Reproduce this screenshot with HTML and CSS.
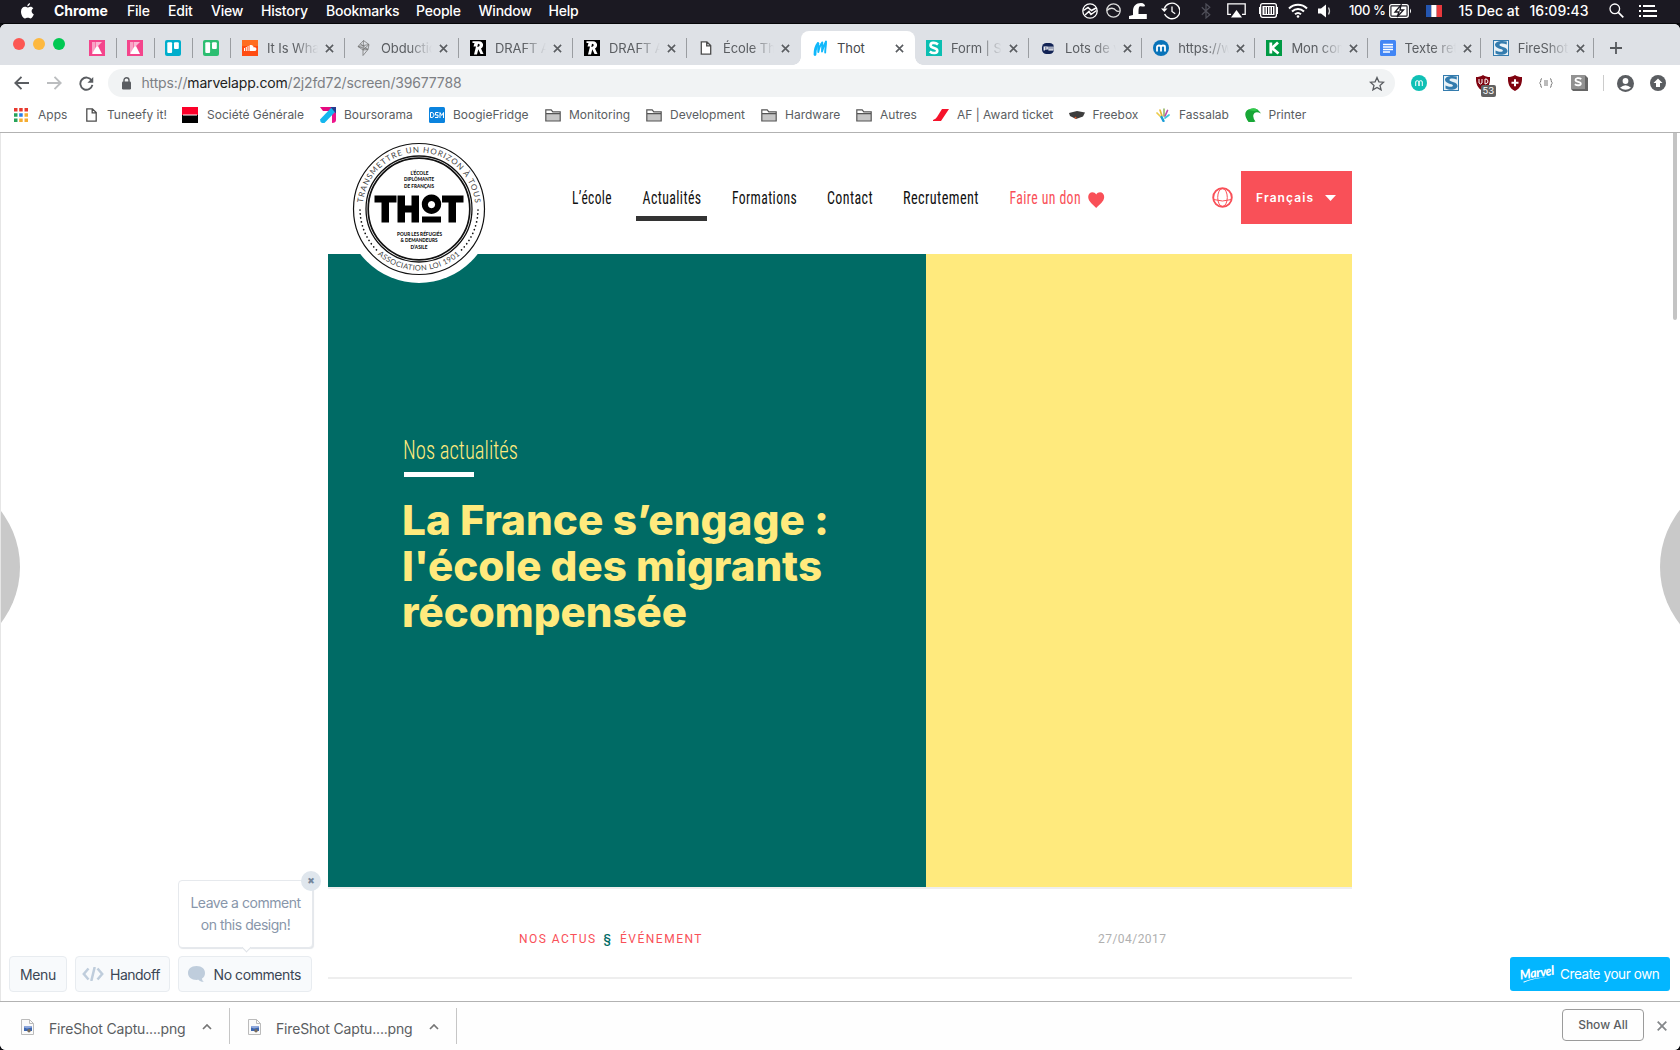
FILE: index.html
```html
<!DOCTYPE html>
<html lang="fr">
<head>
<meta charset="utf-8">
<title>Thot</title>
<link rel="stylesheet" href="styles.css">
</head>
<body>
<svg class="defs" width="0" height="0" aria-hidden="true">
  <symbol id="close" viewBox="0 0 10 10"><path d="M1 1l8 8M9 1L1 9" stroke="#5a5d61" stroke-width="1.8" fill="none"/></symbol>
  <symbol id="folder" viewBox="0 0 16 14"><path d="M1 5.5h14V13H1z" fill="#c6c6c6"/><path d="M.8 13V1.8h5.4l1.6 2h7.4V13zM.8 5.6h14.4" fill="none" stroke="#555" stroke-width="1.2"/></symbol>
  <symbol id="page" viewBox="0 0 11 14"><path d="M.8.8h5.6l3.8 3.8v8.6H.8zM6.2.8v4h4" fill="#fff" stroke="#4d4d4d" stroke-width="1.3"/></symbol>
  <symbol id="pink" viewBox="0 0 16 16"><path d="M0 0h16v16H0z" fill="#f4458c"/><path d="M3 2h3.500v11H3z" fill="#f9a3c6"/><path d="M7 2h6L7 8z" fill="#f9b9d4"/><path d="M7 7l2-1 4 8H3z" fill="#fff"/></symbol>
  <symbol id="board" viewBox="0 0 16 16"><rect width="16" height="16" rx="2"/><rect x="2.3" y="2.3" width="4.8" height="10.8" rx="1" fill="#fff"/><rect x="9" y="2.3" width="4.8" height="6.6" rx="1" fill="#fff"/></symbol>
  <symbol id="draft" viewBox="0 0 16 16"><path d="M0 0h16v16H0z"/><path d="M2.500 3V1.300h6.500c4.800 0 5.300 5.700 2 7.200l2.500 5.500h-3L8.300 9.300 7 14.500H4L6 6.500H3.500L4.500 3zM8 3.800L7.300 7c2.700 0 3.400-3.200.7-3.200z" fill="#fff" fill-rule="evenodd"/></symbol>
  <symbol id="fireshot" viewBox="0 0 16 16"><path d="M0 0h16v16H0z" fill="#347cae"/><path d="M1 1h14v14H1z" fill="#e9f2f7"/><path d="M13.800 1.500v3C10 3 6 3.200 6.500 5.300c.5 1.700 8 1.700 8 5.700 0 3.500-7 5-12 2.500v-3c4 1.800 7.500 1.500 7.400 0C9.600 8.700 2 8.800 2 4.800 2 1.500 8 0 13.800 1.500z" fill="#347cae"/></symbol>
  <symbol id="file" viewBox="0 0 13 16"><path d="M.5.500h8l4 4v11H.5z" fill="#fafafa" stroke="#bbb"/><path d="M8.500.500v4h4" fill="none" stroke="#bbb"/><path d="M3 7h8v5H3z" fill="#8fa8dc"/><path d="M3 8.500l3 1 5-1V12H3z" fill="#3c66b0"/><circle cx="8" cy="11.800" r="1.700" fill="#7a6c5b"/></symbol>
  <symbol id="up" viewBox="0 0 10 6"><path d="M1 5l4-4 4 4" fill="none" stroke="#757575" stroke-width="1.700"/></symbol>
</svg>

<header class="menubar">
  <nav class="menus">
    <svg width="13" height="16" viewBox="0 0 13 16"><path d="M9 0c.1 1.700-1.200 3.300-2.700 3.300C6.100 1.800 7.500.200 9 0zM6.500 4.500c.7 0 1.500-.8 2.900-.8 1.200 0 2.300.6 2.900 1.600-2.500 1.500-2 5 .5 6-.7 1.900-1.900 4.100-3.200 4.100-1.100 0-1.500-.7-2.800-.7s-1.700.7-2.800.7C1.900 15.400 0 11.500 0 8.700 0 5.600 2 3.800 3.900 3.800c1.200 0 2 .7 2.600.7z" fill="#fff"/></svg>
    <b>Chrome</b><span>File</span><span>Edit</span><span>View</span><span>History</span><span>Bookmarks</span><span>People</span><span>Window</span><span>Help</span>
  </nav>
  <div class="status">
    <svg width="16" height="16" viewBox="0 0 16 16" fill="none" stroke="#fff"><circle cx="8" cy="8" r="7.200" stroke-width="1.300"/><path d="M1.500 7.500L6 4.500l3.500 3L14 5M3 12l4-3.500 2 3 5.500-4" stroke-width="1.500"/></svg>
    <svg width="15" height="15" viewBox="0 0 15 15" fill="none" stroke="#ddd" stroke-width="1.300"><circle cx="7.500" cy="7.500" r="6.700"/><path d="M1 7.500c3-3 7-3 9 0 1 1 2.500 1 4 .5"/></svg>
    <svg width="18" height="17" viewBox="0 0 18 17"><path d="M4 9c0-5 3-8 8-8 3 0 4 2 4 3-2 1.300-3.500-.5-5.500.5-1 1-1 4-1 7.500h8.300v5H0v-3l4-1z" fill="#fff"/></svg>
    <svg width="19" height="18" viewBox="0 0 19 18" fill="none" stroke="#fff" stroke-width="1.300"><path d="M3.300 6.500a8 7.800 0 1 1 .3 5.600M11 4.500V9.500l3.200 2.200"/><path d="M0 6.500h6.500L3.300 10z" fill="#fff" stroke="none"/></svg>
    <svg width="10" height="16" viewBox="0 0 10 16" fill="none" stroke="#50505a" stroke-width="1.200"><path d="M.800 4.200l8 7.500L5 15V1l3.800 3.300-8 7.500"/></svg>
    <svg width="19" height="15" viewBox="0 0 19 15"><path d="M4 11.300H.8V.800h17.400v10.500H15" fill="none" stroke="#fff" stroke-width="1.300"/><path d="M9.500 7l5.500 7.500H4z" fill="#fff"/></svg>
    <svg width="19" height="15" viewBox="0 0 19 15"><rect x="1.600" y=".7" width="15.800" height="13.600" rx="2" fill="none" stroke="#fff" stroke-width="1.300"/><path d="M0 4h2v7H0zM17 4h2v7h-2zM3.500 3h12v9h-12z" fill="#fff"/><path d="M6 4v7M8.500 4v7M11 4v7M13.500 4v7" stroke="#1b1922" stroke-width="1"/></svg>
    <svg width="20" height="15" viewBox="0 0 20 15" fill="none" stroke="#fff" stroke-width="2"><path d="M1 5.500c5-5 13-5 18 0M4 8.500c3.500-3.500 8.500-3.500 12 0M7 11.300c2-1.700 4-1.700 6 0"/><circle cx="10" cy="13.500" r="1.300" fill="#fff" stroke="none"/></svg>
    <svg width="14" height="14" viewBox="0 0 14 14"><path d="M0 4.500h3L8 .5v13L3 9.500H0z" fill="#fff"/><path d="M10.500 3.500q2 3.500 0 7" fill="none" stroke="#ccc" stroke-width="1.300"/></svg>
    <span class="pct">100 %</span>
    <svg width="23" height="14" viewBox="0 0 23 14"><rect x=".7" y=".7" width="18.600" height="12.600" rx="2" fill="none" stroke="#fff" stroke-width="1.300"/><path d="M2.500 2.500h15v9h-15z" fill="#fff"/><path d="M12 1L6 8h4l-2 5 6.500-7H11z" fill="#fff" stroke="#1b1922" stroke-width="1.300"/><path d="M21 4.500q2 2.500 0 5z" fill="#fff"/></svg>
    <svg width="16" height="12" viewBox="0 0 16 12"><path d="M0 0h5.300v12H0z" fill="#2456b0"/><path d="M5.300 0h5.400v12H5.300z" fill="#fff"/><path d="M10.700 0H16v12h-5.300z" fill="#e8383c"/></svg>
    <span class="day">15 Dec at</span><span class="clock">16:09:43</span>
    <svg width="15" height="15" viewBox="0 0 15 15" fill="none" stroke="#fff"><circle cx="5.800" cy="5.800" r="4.800" stroke-width="1.300"/><path d="M9.300 9.300l5 5" stroke-width="1.700"/></svg>
    <svg width="18" height="12" viewBox="0 0 18 12" stroke="#fff" stroke-width="1.800"><path d="M0 1h2M4 1h12M0 6h2M4 6h14M0 11h2M4 11h14"/></svg>
  </div>
</header>

<div class="window">
  <div class="tabs">
    <div class="lights"><i class="red"></i><i class="amber"></i><i class="green"></i></div>
    <div class="tab pinned"><svg width="16" height="16"><use href="#pink"/></svg></div>
    <div class="tab pinned"><svg width="16" height="16"><use href="#pink"/></svg></div>
    <div class="tab pinned"><svg width="16" height="16" fill="#00aecc"><use href="#board"/></svg></div>
    <div class="tab pinned"><svg width="16" height="16" fill="#2cbe71"><use href="#board"/></svg></div>
    <div class="tab"><svg width="16" height="16" viewBox="0 0 16 16"><path d="M0 0h16v16H0z" fill="#ff4c12"/><path d="M0 0h16v6H0z" fill="#ff6d20"/><path d="M2.500 8v3M4.300 7v4M6.100 6v5" stroke="#fff" stroke-width="1"/><path d="M7.500 11V5.500c2-1.200 4 0 4.200 2 2-.6 3 .8 2.600 2.200-.3 1-1 1.300-1.800 1.300z" fill="#fff"/></svg><span>It Is Wha</span><svg class="x" width="9" height="9"><use href="#close"/></svg></div>
    <div class="tab"><svg width="16" height="16" viewBox="0 0 16 16" fill="none" stroke="#777" stroke-width=".8"><path d="M7.500.500l5.500 4-1 5-5 6V10L2 6.500zM2 6.500L13 4.500M7.500.5L7 10l6-5.500M2 6.500l10 3M4 3.500L12 9.500M7 10l5-.5"/></svg><span>Obductio</span><svg class="x" width="9" height="9"><use href="#close"/></svg></div>
    <div class="tab"><svg width="16" height="16"><use href="#draft"/></svg><span>DRAFT A</span><svg class="x" width="9" height="9"><use href="#close"/></svg></div>
    <div class="tab"><svg width="16" height="16"><use href="#draft"/></svg><span>DRAFT A</span><svg class="x" width="9" height="9"><use href="#close"/></svg></div>
    <div class="tab last"><svg width="16" height="14"><use href="#page"/></svg><span>École Th</span><svg class="x" width="9" height="9"><use href="#close"/></svg></div>
    <div class="tab active"><svg width="16" height="16" viewBox="0 0 16 16" fill="none" stroke="#10b8fb" stroke-linecap="round" stroke-linejoin="round"><path d="M3 14.500C3 10 4 6 6 3.500" stroke-width="2.800"/><path d="M6 3.500L6.300 12C7 8 8.500 4.500 10.300 2.500L10 11.500C11 8 12.500 4 14 1.500c.3 3-.9 7-.8 11" stroke-width="1.900"/></svg><span>Thot</span><svg class="x" width="9" height="9"><use href="#close"/></svg></div>
    <div class="tab"><svg width="16" height="16" viewBox="0 0 16 16"><path d="M0 0h16v16H0z" fill="#0bbfb2"/><path d="M12 4.500C9 2 4.500 2.500 4.500 5.200c0 3.600 6.800 2 6.800 5.500 0 2.800-4.600 3.200-7.500.7" fill="none" stroke="#fff" stroke-width="2.600"/></svg><span>Form | Se</span><svg class="x" width="9" height="9"><use href="#close"/></svg></div>
    <div class="tab slim"><svg width="16" height="16" viewBox="0 0 16 16"><rect x="2" y="3" width="12" height="11" rx="4.500" fill="#122355"/><path d="M4.200 10.500V7h3v2h-3M9 6.500v3.500h4V6.500M11 6.500v3.500" fill="none" stroke="#fff" stroke-width="1.200"/></svg><span>Lots de v</span><svg class="x" width="9" height="9"><use href="#close"/></svg></div>
    <div class="tab slim"><svg width="16" height="16" viewBox="0 0 16 16"><circle cx="8" cy="8" r="8" fill="#0873b9"/><path d="M4 11.500V7q0-1.500 2-1.500T8 7v4.500V7q0-1.500 2-1.500T12 7v4.500" fill="none" stroke="#fff" stroke-width="1.800"/></svg><span>https://w</span><svg class="x" width="9" height="9"><use href="#close"/></svg></div>
    <div class="tab slim"><svg width="16" height="16" viewBox="0 0 16 16"><path d="M0 0h16v16H0z" fill="#009a44"/><path d="M4.800 2.500v11M12 2.500L6 8l6.500 5.500" fill="none" stroke="#fff" stroke-width="2.800"/></svg><span>Mon com</span><svg class="x" width="9" height="9"><use href="#close"/></svg></div>
    <div class="tab slim"><svg width="16" height="16" viewBox="0 0 16 16"><rect width="16" height="16" rx="1.500" fill="#4286f5"/><path d="M3 4.500h10M3 7h10M3 9.500h10M3 12h7" stroke="#fff" stroke-width="1.300"/></svg><span>Texte ret</span><svg class="x" width="9" height="9"><use href="#close"/></svg></div>
    <div class="tab slim"><svg width="16" height="16"><use href="#fireshot"/></svg><span>FireShot</span><svg class="x" width="9" height="9"><use href="#close"/></svg></div>
    <svg class="plus" width="12" height="12" viewBox="0 0 12 12"><path d="M6 0v12M0 6h12" stroke="#55585c" stroke-width="1.800"/></svg>
  </div>

  <div class="toolbar">
    <svg width="15" height="14" viewBox="0 0 15 14"><path d="M15 7H1.500M7.500.800L1.300 7l6.200 6.200" fill="none" stroke="#5a5d61" stroke-width="1.900"/></svg>
    <svg width="15" height="14" viewBox="0 0 15 14"><path d="M0 7h13.500M7.500.800L13.700 7l-6.200 6.200" fill="none" stroke="#bbbdbf" stroke-width="1.900"/></svg>
    <svg width="15" height="15" viewBox="0 0 16 16"><path d="M13.500 4.800A6.500 6.500 0 1 0 14.300 9.500" fill="none" stroke="#5a5d61" stroke-width="2"/><path d="M15.200 1v6.200H9z" fill="#5a5d61"/></svg>
    <div class="omnibox">
      <svg width="9" height="13" viewBox="0 0 9 13"><rect y="4.500" width="9" height="8" rx="1.200" fill="#5a5d61"/><path d="M2 5V3.200a2.500 2.500 0 0 1 5 0V5" fill="none" stroke="#5a5d61" stroke-width="1.400"/></svg>
      <span class="url">https://<b>marvelapp.com</b>/2j2fd72/screen/39677788</span>
      <svg class="star" width="16" height="15" viewBox="0 0 16 15"><path d="M8 1.500l1.900 4.300 4.700.4L11 9.400l1.100 4.500L8 11.500l-4.100 2.400L5 9.400 1.400 6.200l4.700-.4z" fill="none" stroke="#5a5d61" stroke-width="1.300"/></svg>
    </div>
    <div class="exts">
      <svg width="16" height="16" viewBox="0 0 16 16"><circle cx="8" cy="8" r="8" fill="#10c0b5"/><path d="M4.700 11V7q0-1.300 1.600-1.300T8 7v4V7q0-1.300 1.700-1.300T11.300 7v4" fill="none" stroke="#fff"/></svg>
      <svg width="16" height="16"><use href="#fireshot"/></svg>
      <div class="ublock"><svg width="16" height="16" viewBox="0 0 16 16"><path d="M8 0c2 1.500 4.500 2 7 2 .3 6-1 11-7 14C2 13 .700 8 1 2c2.500 0 5-.5 7-2z" fill="#800310"/><path d="M4 4v4q1.500 2 3 0V4M10 4v5q3.500-.5 3-3t-3-2z" fill="none" stroke="#fff"/></svg><span>53</span></div>
      <svg width="16" height="16" viewBox="0 0 16 16"><path d="M8 0c2 1.500 4.500 2 7 2 .3 6-1 11-7 14C2 13 .700 8 1 2c2.500 0 5-.5 7-2z" fill="#800310"/><path d="M8 4.200v7M4.500 7.700h7" stroke="#fff" stroke-width="2"/></svg>
      <svg width="14" height="10" viewBox="0 0 14 10" fill="none" stroke="#777"><path d="M3 .500Q1.800 .5 1.800 2.500T.500 5Q1.800 5.500 1.800 7.500T3 9.500M11 .500q1.200 0 1.200 2T13.500 5Q12.200 5.500 12.200 7.500T11 9.500M5 3h4M5 5h4M5 7h4"/></svg>
      <svg width="17" height="16" viewBox="0 0 17 16"><path d="M0 14l2 2h15V3l-3-3z" fill="#666"/><path d="M0 0h14v14H0z" fill="#929292"/><path d="M10.300 4C8 2.500 4.500 3 4.500 5c0 2.500 5.300 1.200 5.300 3.700 0 2-3.800 2-6 .5" fill="none" stroke="#fff" stroke-width="1.800"/></svg>
      <i class="bar"></i>
      <svg width="17" height="17" viewBox="0 0 17 17"><circle cx="8.500" cy="8.500" r="8.500" fill="#5a5d61"/><circle cx="8.500" cy="6" r="2.900" fill="#fff"/><path d="M3 12.800q5.500-5 11 0-5.500 4-11 0z" fill="#fff"/></svg>
      <svg width="16" height="16" viewBox="0 0 16 16"><circle cx="8" cy="8" r="8" fill="#5a5d61"/><path d="M8 3.500L12.500 8H10v4H6V8H3.500z" fill="#fff"/></svg>
    </div>
  </div>

  <div class="bookmarks">
    <svg width="14" height="14" viewBox="0 0 14 14"><path d="M0 0h3.500v3.500H0zM5.200 0h3.500v3.500H5.200zM10.500 0H14v3.500h-3.500z" fill="#e8392e"/><path d="M0 5.200h3.500v3.500H0zM0 10.500h3.500V14H0z" fill="#26a35a"/><path d="M5.200 5.200h3.500v3.500H5.200z" fill="#287de8"/><path d="M10.500 5.200H14v3.500h-3.500zM5.200 10.500h3.500V14H5.200zM10.500 10.500H14V14h-3.500z" fill="#f5ad32"/></svg><span>Apps</span>
    <svg width="11" height="14"><use href="#page"/></svg><span>Tuneefy it!</span>
    <svg width="16" height="16" viewBox="0 0 16 16"><path d="M0 0h16v8H0z" fill="#fc0029"/><path d="M0 8h16v8H0z"/><path d="M1 8h14" stroke="#fff"/></svg><span>Société Générale</span>
    <svg width="16" height="16" viewBox="0 0 16 16"><path d="M0 0h12l-2 4H3z" fill="#e5097f"/><path d="M12 5h4v8q0 3-4 3z" fill="#ed158b"/><path d="M0 12.500L12 0h4v4L4.500 16H2q-2-1-2-3.500z" fill="#14b6ee"/><path d="M10.500 0H16v6.500z" fill="#253a8e"/></svg><span>Boursorama</span>
    <svg width="16" height="16" viewBox="0 0 16 16"><rect width="16" height="16" rx="1.500" fill="#0a83de"/><path d="M1.500 5.500v5H3q2-.5 2-2.500T3 5.500zM9.500 5.500h-3V8h2.500v2.500H6M11 11V5.500l1.700 3 1.800-3V11" fill="none" stroke="#fff" stroke-width="1"/></svg><span>BoogieFridge</span>
    <svg width="16" height="14"><use href="#folder"/></svg><span>Monitoring</span>
    <svg width="16" height="14"><use href="#folder"/></svg><span>Development</span>
    <svg width="16" height="14"><use href="#folder"/></svg><span>Hardware</span>
    <svg width="16" height="14"><use href="#folder"/></svg><span>Autres</span>
    <svg width="16" height="12" viewBox="0 0 16 12"><path d="M9 0h7L8 12H0v-1q3-1 4-3z" fill="#f5132b"/></svg><span>AF | Award ticket</span>
    <svg width="16" height="8" viewBox="0 0 16 8"><path d="M0 2l8-2 8 1.500-2 4L7 8 1 5z" fill="#3d3d3d"/><circle cx="6.500" cy="6.800" r="1" fill="#e85b28"/></svg><span>Freebox</span>
    <svg width="14" height="14" viewBox="0 0 14 14" fill="none" stroke-width="1.700" stroke-linecap="round"><path d="M4 2l2 6" stroke="#e6b93a"/><path d="M1 5l4 4" stroke="#eccb49"/><path d="M8 1v7" stroke="#9aba70"/><path d="M11.500 2.500L9 8" stroke="#bb4fae"/><path d="M13 7l-4 3" stroke="#3fc5df"/><path d="M5.500 9l2 4" stroke="#1b9ed8" stroke-width="2.400"/></svg><span>Fassalab</span>
    <svg width="16" height="14" viewBox="0 0 16 14"><path d="M3.500 14Q-3 4.500 3.500 1.500 12-2 16 5.500q-4-2-6.500-.5-3 3 1 8.500l-2 .5z" fill="#18a736"/><path d="M3 2q6-3.500 10 0-2 1-4 1z" fill="#31c94c"/></svg><span>Printer</span>
  </div>

  <main class="viewport">
    <i class="pager prev"></i><i class="pager next"></i><i class="scroll"></i>
    <div class="site">
      <div class="site-head">
        <svg class="logo" width="148" height="148" viewBox="-74 -74 148 148">
          <defs><path id="arc-top" d="M-56.500 0a56.500 56.500 0 0 1 113 0"/><path id="arc-low" d="M-61.500 0a61.500 61.500 0 0 0 123 0"/></defs>
          <circle r="74" fill="#fff"/>
          <circle r="65.500" fill="none" stroke="#111" stroke-width="1.200"/>
          <circle r="53" fill="none" stroke="#111" stroke-width="1.300"/>
          <circle r="50.800" fill="none" stroke="#111" stroke-width="1.700"/>
          <path d="M-59 1A59 59 0 0 0-41 42.500M59 1A59 59 0 0 1 41 42.500" fill="none" stroke="#111" stroke-width="1.700" stroke-linecap="round" stroke-dasharray=".01 4"/>
          <text class="ring"><textPath href="#arc-top" startOffset="6" textLength="166">TRANSMETTRE UN HORIZON À TOUS</textPath></text>
          <text class="ring low"><textPath href="#arc-low" startOffset="51" textLength="91">ASSOCIATION LOI 1901</textPath></text>
          <g class="tiny"><text x="-8.500" y="-34.500" textLength="18" lengthAdjust="spacingAndGlyphs">L’ÉCOLE</text><text x="-15" y="-28" textLength="30" lengthAdjust="spacingAndGlyphs">DIPLÔMANTE</text><text x="-15" y="-21.500" textLength="30" lengthAdjust="spacingAndGlyphs">DE FRANÇAIS</text><text x="-22" y="26.500" textLength="45" lengthAdjust="spacingAndGlyphs">POUR LES RÉFUGIÉS</text><text x="-18.500" y="33" textLength="37" lengthAdjust="spacingAndGlyphs">&amp; DEMANDEURS</text><text x="-8.500" y="39.700" textLength="17" lengthAdjust="spacingAndGlyphs">D’ASILE</text></g>
          <path d="M-44.500-13.500h22v7H-30v20h-7.500v-20h-7zM-21.500-13.500h7.500v10h6.500v-10H0v27h-7.500V3.500H-14v10h-7.500zM23-13.500h21.500v7H37v20h-7.500v-20H23zM3 7.500h19v6H3zM12.500-14.500a9.700 9.700 0 1 1-.01 0zM12.500-8a3.600 3.600 0 1 0 .01 0z" fill="#000" fill-rule="evenodd"/>
        </svg>
        <nav class="nav">
          <svg width="40" height="30"><text x="0" y="20" textLength="40" lengthAdjust="spacingAndGlyphs">L’école</text></svg>
          <svg class="current" width="71" height="30"><text x="6.500" y="20" textLength="59" lengthAdjust="spacingAndGlyphs">Actualités</text></svg>
          <svg width="66" height="30"><text x="0" y="20" textLength="65" lengthAdjust="spacingAndGlyphs">Formations</text></svg>
          <svg width="47" height="30"><text x="0" y="20" textLength="46" lengthAdjust="spacingAndGlyphs">Contact</text></svg>
          <svg width="77" height="30"><text x="0" y="20" textLength="76" lengthAdjust="spacingAndGlyphs">Recrutement</text></svg>
          <svg class="give" width="96" height="30"><text x=".5" y="20" textLength="71.500" lengthAdjust="spacingAndGlyphs">Faire un don</text><path d="M87.200 24c-3-3.500-8-6.500-8-11 0-5.500 6-6 8-2.500 2-3.500 8-3 8 2.500 0 4.500-5 7.500-8 11z"/></svg>
        </nav>
        <svg class="globe" width="21" height="21" viewBox="0 0 21 21" fill="none" stroke="#f95058"><circle cx="10.500" cy="10.500" r="9.300" stroke-width="1.900"/><ellipse cx="10.500" cy="10.500" rx="4.800" ry="9"/><path d="M1.500 12.500q9 3 18 0"/></svg>
        <div class="lang"><span>Français</span><svg width="11" height="6" viewBox="0 0 11 6"><path d="M0 0h11L5.500 6z" fill="#fff"/></svg></div>
      </div>
      <section class="hero">
        <div class="hero-text">
          <svg class="kicker" width="118" height="34"><text x="-1" y="25" textLength="115" lengthAdjust="spacingAndGlyphs">Nos actualités</text></svg>
          <i class="rule"></i>
          <svg class="title" width="440" height="150"><text x="-2" y="40.500" textLength="427" lengthAdjust="spacingAndGlyphs">La France s’engage :</text><text x="-2" y="86.500" textLength="420" lengthAdjust="spacingAndGlyphs">l'école des migrants</text><text x="-2" y="132.500" textLength="285" lengthAdjust="spacingAndGlyphs">récompensée</text></svg>
        </div>
        <div class="hero-side"></div>
      </section>
      <div class="meta">
        <svg width="190" height="20"><text x="0" y="15" textLength="76">NOS ACTUS</text><text class="sect" x="84.500" y="15">§</text><text x="101" y="15" textLength="81.500">ÉVÉNEMENT</text></svg>
        <svg width="70" height="20"><text class="date" x="0" y="15" textLength="68">27/04/2017</text></svg>
      </div>
    </div>
    <div class="tools">
      <div class="tool menu">Menu</div>
      <div class="tool handoff"><svg width="22" height="14" viewBox="0 0 22 14" fill="none" stroke="#bfcddc" stroke-width="2.500"><path d="M6.500 1.500L1.800 7l4.700 5.500M15.500 1.500L20.200 7l-4.700 5.500M12.700 0L9.300 14"/></svg><span>Handoff</span></div>
      <div class="tool comments"><svg width="17" height="16" viewBox="0 0 17 16"><path d="M8.500 0C14 0 17 3 17 7c0 2.500-1 4.500-3 5.500 0 1.500.8 2.500 2 3.300-2.500.2-4-.5-5.500-2C4 14.500 0 11.500 0 7c0-4 3-7 8.500-7z" fill="#bfcddc"/></svg><span>No comments</span>
        <div class="tip">Leave a comment<br>on this design!<i class="tip-x">✖</i></div>
      </div>
    </div>
    <div class="create"><svg width="36" height="20" viewBox="0 0 36 20"><text x="0" y="13" transform="rotate(-8 18 10)" textLength="34" lengthAdjust="spacingAndGlyphs">Marvel</text><path d="M3 18q12-5 24-4.500-13 .5-23 5z" fill="#fff"/></svg><span>Create your own</span></div>
  </main>

  <footer class="shelf">
    <div class="dl"><svg width="13" height="16"><use href="#file"/></svg><span>FireShot Captu....png</span><svg width="10" height="6"><use href="#up"/></svg></div>
    <div class="dl"><svg width="13" height="16"><use href="#file"/></svg><span>FireShot Captu....png</span><svg width="10" height="6"><use href="#up"/></svg></div>
    <div class="showall">Show All</div>
    <svg class="shut" width="10" height="10" viewBox="0 0 10 10"><path d="M.7.700l8.600 8.600M9.300.700L.7 9.300" stroke="#84878a" stroke-width="1.800"/></svg>
  </footer>
</div>
</body>
</html>
```
FILE: styles.css
```css
* { box-sizing: border-box; }
body {
  margin: 0;
  width: 1680px;
  height: 1050px;
  overflow: hidden;
  display: flex;
  flex-direction: column;
  background: #0d0d12;
  font-family: Inter, "Liberation Sans", sans-serif;
  color: #5a5d61;
}
svg { display: block; flex: none; }
.defs { position: absolute; }

/* system menu bar */
.menubar {
  height: 24px;
  flex: none;
  display: flex;
  justify-content: space-between;
  padding-bottom: 2px;
  background: #1b1922;
  border-bottom: 1px solid #050508;
  color: #fff;
  font-size: 14px;
  font-weight: 500;
  letter-spacing: -.22px;
  line-height: 21px;
  white-space: nowrap;
}
.menus {
  display: grid;
  grid-template-columns: 33px 73px 41px 43px 50px 65px 90px 62.500px 70px 40px;
  padding-left: 21px;
  align-items: center;
}
.menus b { letter-spacing: -.05px; }
.status {
  display: grid;
  grid-template-columns: 24px 23px 32px 39px 26px 32px 28.500px 30.500px 31px 39.500px 37.500px 32.500px 71px 79.500px 30px 41px;
  align-items: center;
  margin-left: -1px;
}
.status svg:nth-child(-n+4) { margin-left: -1px; }
.status .pct { font-size: 13px; letter-spacing: -.4px; }
.status .day { letter-spacing: 0; }
.status .clock { letter-spacing: 0; }

/* window and tabs */
.window {
  flex: 1;
  display: flex;
  flex-direction: column;
  background: #fff;
  border-radius: 6px;
  overflow: hidden;
}
.tabs {
  height: 41px;
  flex: none;
  display: flex;
  align-items: center;
  padding-top: 7px;
  background: #dee1e6;
}
.lights { width: 78.500px; padding: 0 0 8px 13px; display: flex; gap: 8px; }
.lights i { width: 12px; height: 12px; border-radius: 50%; }
.red { background: #fc5753; }
.amber { background: #fdb83f; }
.green { background: #00c852; }
.tab {
  width: 114px;
  height: 34px;
  flex: none;
  display: flex;
  align-items: center;
  padding-left: 11.500px;
  background: linear-gradient(#9a9da1, #9a9da1) right 7px / 1px 20px no-repeat;
  font-size: 13px;
}
.tab.slim { width: 113.200px; }
.tab.pinned { width: 38px; padding-left: 10px; }
.tab.last, .tab.active { background-image: none; }
.tab span {
  width: 56px;
  margin: 0 2px 1px 9px;
  letter-spacing: -.1px;
  white-space: nowrap;
  -webkit-mask-image: linear-gradient(90deg, #000 28px, transparent 51px);
  mask-image: linear-gradient(90deg, #000 28px, transparent 51px);
}
.tab.active {
  position: relative;
  background: #fff;
  border-radius: 8px 8px 0 0;
  color: #45484c;
}
.tab.active span { -webkit-mask-image: none; mask-image: none; }
.tab.active::before, .tab.active::after {
  content: "";
  position: absolute;
  bottom: 0;
  left: -8px;
  width: 8px;
  height: 8px;
  background: radial-gradient(circle at 0 0, transparent 7.500px, #fff 8px);
}
.tab.active::after {
  left: auto;
  right: -8px;
  background: radial-gradient(circle at 100% 0, transparent 7.500px, #fff 8px);
}
.plus { margin-left: 16px; }

/* navigation bar */
.toolbar {
  height: 36px;
  flex: none;
  display: grid;
  grid-template-columns: 32.500px 32px 29px 1287px 1fr;
  align-items: center;
  padding-left: 14px;
}
.omnibox {
  height: 28px;
  display: flex;
  align-items: center;
  padding: 0 10px 0 14px;
  border-radius: 14px;
  background: #f1f3f4;
  font-size: 14px;
}
.url { margin: 0 0 1px 11px; letter-spacing: -.17px; color: #7d8084; }
.url b { font-weight: 400; color: #222; }
.star { margin-left: auto; }
.exts {
  display: grid;
  grid-template-columns: 32px 32px 32px 32.500px 32px 31.500px 14.500px 32.500px 16px;
  align-items: center;
  padding-left: 16px;
}
.ublock { position: relative; }
.ublock span {
  position: absolute;
  left: 6px;
  top: 10px;
  padding: 0 2px;
  border-radius: 2px;
  background: #616161;
  color: #fff;
  font-size: 9.500px;
  line-height: 12px;
}
.bar { width: 1px; height: 16px; background: #ccc; }

/* bookmarks */
.bookmarks {
  height: 32px;
  flex: none;
  display: grid;
  grid-template-columns: 24px 47.500px 21.500px 75px 25px 112.500px 24.500px 84.500px 24.500px 91.500px 24.500px 76.500px 24.500px 90.500px 24.500px 70.500px 24.500px 52.500px 24.500px 112px 23.500px 63px 23.500px 65.500px 24px 60px;
  align-items: center;
  padding: 0 0 4px 14px;
  border-bottom: 1px solid #b2b2b2;
  font-size: 12px;
  white-space: nowrap;
}

/* page */
.viewport {
  position: relative;
  height: 868px;
  flex: none;
  overflow: hidden;
  border-left: 1px solid #e6e6e6;
  background: #fff;
}
.pager {
  position: absolute;
  top: 342px;
  width: 184px;
  height: 184px;
  border-radius: 50%;
  background: #c9c9c9;
}
.prev { left: -165px; }
.next { right: -164px; }
.scroll {
  position: absolute;
  right: 3px;
  top: 0;
  width: 4px;
  height: 187px;
  border-radius: 0 0 2px 2px;
  background: #c4c4c4;
}
.site { width: 1024px; margin-left: 327px; }
.site-head { height: 121px; display: flex; position: relative; }
.logo { position: absolute; left: 17px; top: 2px; z-index: 1; }
.ring { font: 8px Lato, sans-serif; fill: #444; letter-spacing: .8px; }
.ring.low { font-size: 7.500px; }
.tiny { font: 900 4.600px Lato, sans-serif; fill: #111; }
.nav {
  display: flex;
  width: 877px;
  padding: 51px 0 0 244px;
  font: 400 17.500px Roboto, sans-serif;
  font-stretch: 75%;
  letter-spacing: .5px;
}
.nav .current {
  height: 37px;
  margin: 0 25px 0 24px;
  border-bottom: 5px solid #333;
}
.nav svg { fill: #111; flex: none; }
.nav svg:nth-child(3),
.nav svg:nth-child(4),
.nav svg:nth-child(5) { margin-right: 29px; }
.nav .give { fill: #f95058; }
.globe { margin: 54px 8px 0 7px; }
.lang {
  flex: 1;
  height: 53px;
  margin-top: 38px;
  display: flex;
  align-items: center;
  justify-content: space-between;
  padding: 0 16px 0 15px;
  background: #f95058;
  color: #fff;
  font-size: 12px;
  font-weight: 600;
  letter-spacing: 1.100px;
}
.hero {
  height: 635px;
  display: flex;
  border-bottom: 2px solid #eee;
}
.hero-text {
  width: 598px;
  padding: 180px 0 0 76px;
  background: #006b65;
  fill: #ffea7d;
}
.kicker { font: 300 26px Roboto, sans-serif; font-stretch: 75%; overflow: visible; }
.rule { display: block; width: 70px; height: 5px; margin: 4px 0 17px 0; background: #fff; }
.title { font: 800 41px Inter, sans-serif; overflow: visible; }
.hero-side { flex: 1; background: #ffea7d; }
.meta {
  height: 90px;
  display: flex;
  justify-content: space-between;
  padding: 39px 184px 0 191px;
  border-bottom: 2px solid #eee;
  font: 12px Roboto, sans-serif;
  fill: #f95058;
}
.meta .sect { fill: #006b65; font-weight: 500; }
.meta .date { fill: #b0b0b0; }

/* prototype controls */
.tools {
  position: absolute;
  left: 8px;
  bottom: 9px;
  display: flex;
  gap: 8px;
  font-size: 14px;
  color: #3b4654;
  white-space: nowrap;
}
.tool {
  height: 36px;
  display: flex;
  align-items: center;
  border: 1px solid #e8ecf0;
  border-radius: 4px;
  background: #f8fafc;
}
.menu { width: 58px; padding-left: 10px; letter-spacing: -.4px; }
.handoff { width: 95px; padding-left: 6px; gap: 6px; letter-spacing: -.5px; }
.comments { position: relative; width: 134px; padding-left: 8.500px; gap: 9px; letter-spacing: -.42px; }
.tip {
  position: absolute;
  left: -1px;
  top: -77px;
  width: 135px;
  height: 68px;
  padding-top: 11px;
  border: 1px solid #e6e9ed;
  border-radius: 4px;
  box-shadow: 1px 1px 1px #e3e6ea;
  background: #fff;
  color: #8896aa;
  line-height: 22px;
  text-align: center;
  letter-spacing: -.48px;
}
.tip::after {
  content: "";
  position: absolute;
  left: 64px;
  bottom: -4px;
  width: 6px;
  height: 6px;
  border: solid #dfe3e8;
  border-width: 0 1px 1px 0;
  background: #fff;
  transform: rotate(45deg);
}
.tip-x {
  position: absolute;
  right: -9px;
  top: -10px;
  width: 20px;
  height: 20px;
  border-radius: 50%;
  background: #dfe6ed;
  color: #76869b;
  font: 9px/20px "DejaVu Sans", sans-serif;
  letter-spacing: 0;
}
.create {
  position: absolute;
  right: 10px;
  bottom: 10px;
  width: 160px;
  height: 34px;
  display: flex;
  align-items: center;
  gap: 4px;
  padding-left: 10px;
  border-radius: 3px;
  background: #03b6ff;
  color: #fff;
  font-size: 13.500px;
  letter-spacing: -.4px;
  white-space: nowrap;
}
.create text { font: italic 900 13px Lato, sans-serif; fill: #fff; }

/* downloads */
.shelf {
  flex: 1;
  display: flex;
  align-items: center;
  border-top: 1px solid #b2b2b2;
  background: #fefefe;
  font-size: 14px;
}
.dl {
  width: 227px;
  height: 36px;
  display: flex;
  align-items: center;
  padding: 2px 0 0 18px;
  border-right: 1px solid #c6c6c6;
  white-space: nowrap;
}
.dl:first-child { width: 230px; padding-left: 21px; }
.dl span { width: 153px; margin: 2px 0 0 15px; letter-spacing: -.17px; }
.showall {
  width: 82px;
  height: 32px;
  margin: 0 0 2px auto;
  border: 1px solid #9b9b9b;
  border-radius: 4px;
  font-size: 12px;
  font-weight: 500;
  line-height: 30px;
  text-align: center;
}
.shut { margin: 0 13px 0 13px; }
```
